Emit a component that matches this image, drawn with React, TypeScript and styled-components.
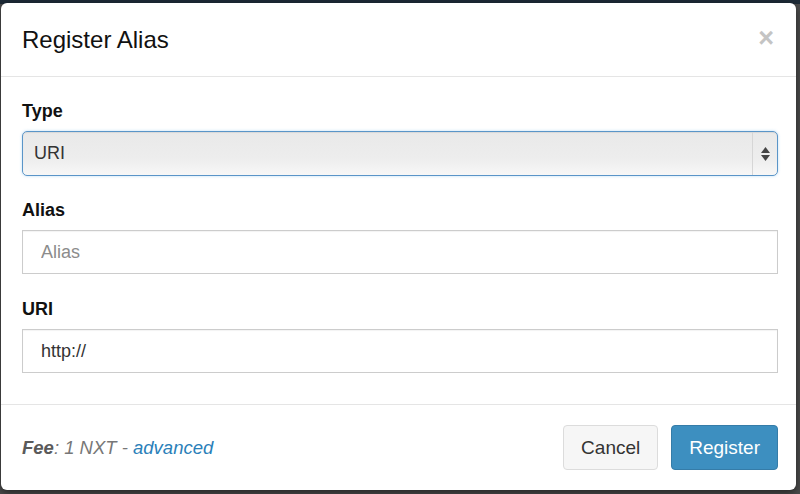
import React, { FC } from 'react';
import styled, { createGlobalStyle } from 'styled-components';

const GlobalStyle = createGlobalStyle`
    html, body {
        margin: 0;
        padding: 0;
        height: 100%;
    }
    body {
        background: #4a4a4a;
        font-family: "Liberation Sans", Arial, sans-serif;
        overflow: hidden;
    }
`;

const Backdrop = styled.div`
    width: 800px;
    height: 494px;
    box-sizing: border-box;
    padding: 3px 4px 4px 1px;
    background: linear-gradient(to bottom, #1d2a36 0, #1d2a36 4px, #4b4b4b 4px);
`;

const Modal = styled.div`
    height: 100%;
    background: #fff;
    border-radius: 6px;
    display: flex;
    flex-direction: column;
    box-shadow: 0 3px 9px rgba(0, 0, 0, 0.5);
`;

const Header = styled.div`
    height: 74px;
    box-sizing: border-box;
    padding: 0 21px;
    display: flex;
    align-items: center;
    justify-content: space-between;
    border-bottom: 1px solid #e5e5e5;
`;

const Title = styled.h4`
    margin: 0;
    font-size: 24px;
    font-weight: normal;
    color: #111;
`;

const Close = styled.button`
    border: 0;
    background: none;
    padding: 0;
    margin: 0 1px 2px 0;
    font-family: "Liberation Sans", Arial, sans-serif;
    font-size: 27px;
    font-weight: bold;
    color: #c4c4c4;
    line-height: 1;
`;

const Body = styled.div`
    flex: 1;
    padding: 24px 18px 0 21px;
    border-bottom: 1px solid #e5e5e5;
`;

const Group = styled.div<{ tight?: boolean }>`
    margin-bottom: ${(p) => (p.tight ? '24px' : '25px')};
`;

const Label = styled.label`
    display: block;
    font-size: 18px;
    line-height: 20px;
    font-weight: bold;
    color: #111;
    margin-bottom: 10px;
`;

const SelectBox = styled.div`
    height: 45px;
    box-sizing: border-box;
    display: flex;
    border: 1px solid #5a95c8;
    border-radius: 5px;
    background: linear-gradient(to bottom, #e9e9e9 0%, #ededed 60%, #f7f7f7 100%);
    box-shadow: inset 0 1px 1px rgba(0, 0, 0, 0.075), 0 0 3px rgba(102, 175, 233, 0.45);
    overflow: hidden;
`;

const SelectValue = styled.div`
    flex: 1;
    display: flex;
    align-items: center;
    padding-left: 11px;
    font-size: 18px;
    color: #333;
`;

const Arrows = styled.div`
    width: 24px;
    border-left: 1px solid #d6d6d6;
    display: flex;
    flex-direction: column;
    align-items: center;
    justify-content: center;
    gap: 2px;
`;

const Input = styled.input`
    display: block;
    width: 100%;
    height: 44px;
    box-sizing: border-box;
    border: 1px solid #cccccc;
    border-radius: 0;
    padding: 0 18px;
    font-family: "Liberation Sans", Arial, sans-serif;
    font-size: 18px;
    color: #333;
    box-shadow: inset 0 1px 1px rgba(0, 0, 0, 0.05);
    &::placeholder {
        color: #8c8c8c;
    }
`;

const Footer = styled.div`
    flex: 0 0 85px;
    box-sizing: border-box;
    padding: 0 18px 0 21px;
    display: flex;
    align-items: center;
    justify-content: space-between;
`;

const Fee = styled.div`
    font-size: 18.5px;
    font-style: italic;
    color: #777;
    b {
        color: #5a5a5a;
    }
`;

const Link = styled.a`
    color: #2a80b9;
    text-decoration: none;
`;

const Buttons = styled.div`
    display: flex;
    gap: 13px;
`;

const Button = styled.button<{ primary?: boolean }>`
    height: 45px;
    padding: 0 17px;
    border-radius: 4px;
    font-family: "Liberation Sans", Arial, sans-serif;
    font-size: 19px;
    border: 1px solid ${(p) => (p.primary ? '#357ca8' : '#dcdcdc')};
    background: ${(p) => (p.primary ? '#3d8fc0' : '#f6f6f6')};
    color: ${(p) => (p.primary ? '#fff' : '#333')};
`;

const App: FC = () => {
    return (
        <>
            <GlobalStyle />
            <Backdrop>
                <Modal>
                    <Header>
                        <Title>Register Alias</Title>
                        <Close>×</Close>
                    </Header>
                    <Body>
                        <Group tight>
                            <Label>Type</Label>
                            <SelectBox>
                                <SelectValue>URI</SelectValue>
                                <Arrows>
                                    <svg width="9" height="6" viewBox="0 0 9 6">
                                        <path d="M4.5 0 L9 6 L0 6 Z" fill="#444" />
                                    </svg>
                                    <svg width="9" height="6" viewBox="0 0 9 6">
                                        <path d="M0 0 L9 0 L4.5 6 Z" fill="#444" />
                                    </svg>
                                </Arrows>
                            </SelectBox>
                        </Group>
                        <Group>
                            <Label>Alias</Label>
                            <Input placeholder="Alias" />
                        </Group>
                        <Group>
                            <Label>URI</Label>
                            <Input defaultValue="http://" />
                        </Group>
                    </Body>
                    <Footer>
                        <Fee>
                            <b>Fee</b>: 1 NXT - <Link href="#">advanced</Link>
                        </Fee>
                        <Buttons>
                            <Button>Cancel</Button>
                            <Button primary>Register</Button>
                        </Buttons>
                    </Footer>
                </Modal>
            </Backdrop>
        </>
    );
};

export default App;
